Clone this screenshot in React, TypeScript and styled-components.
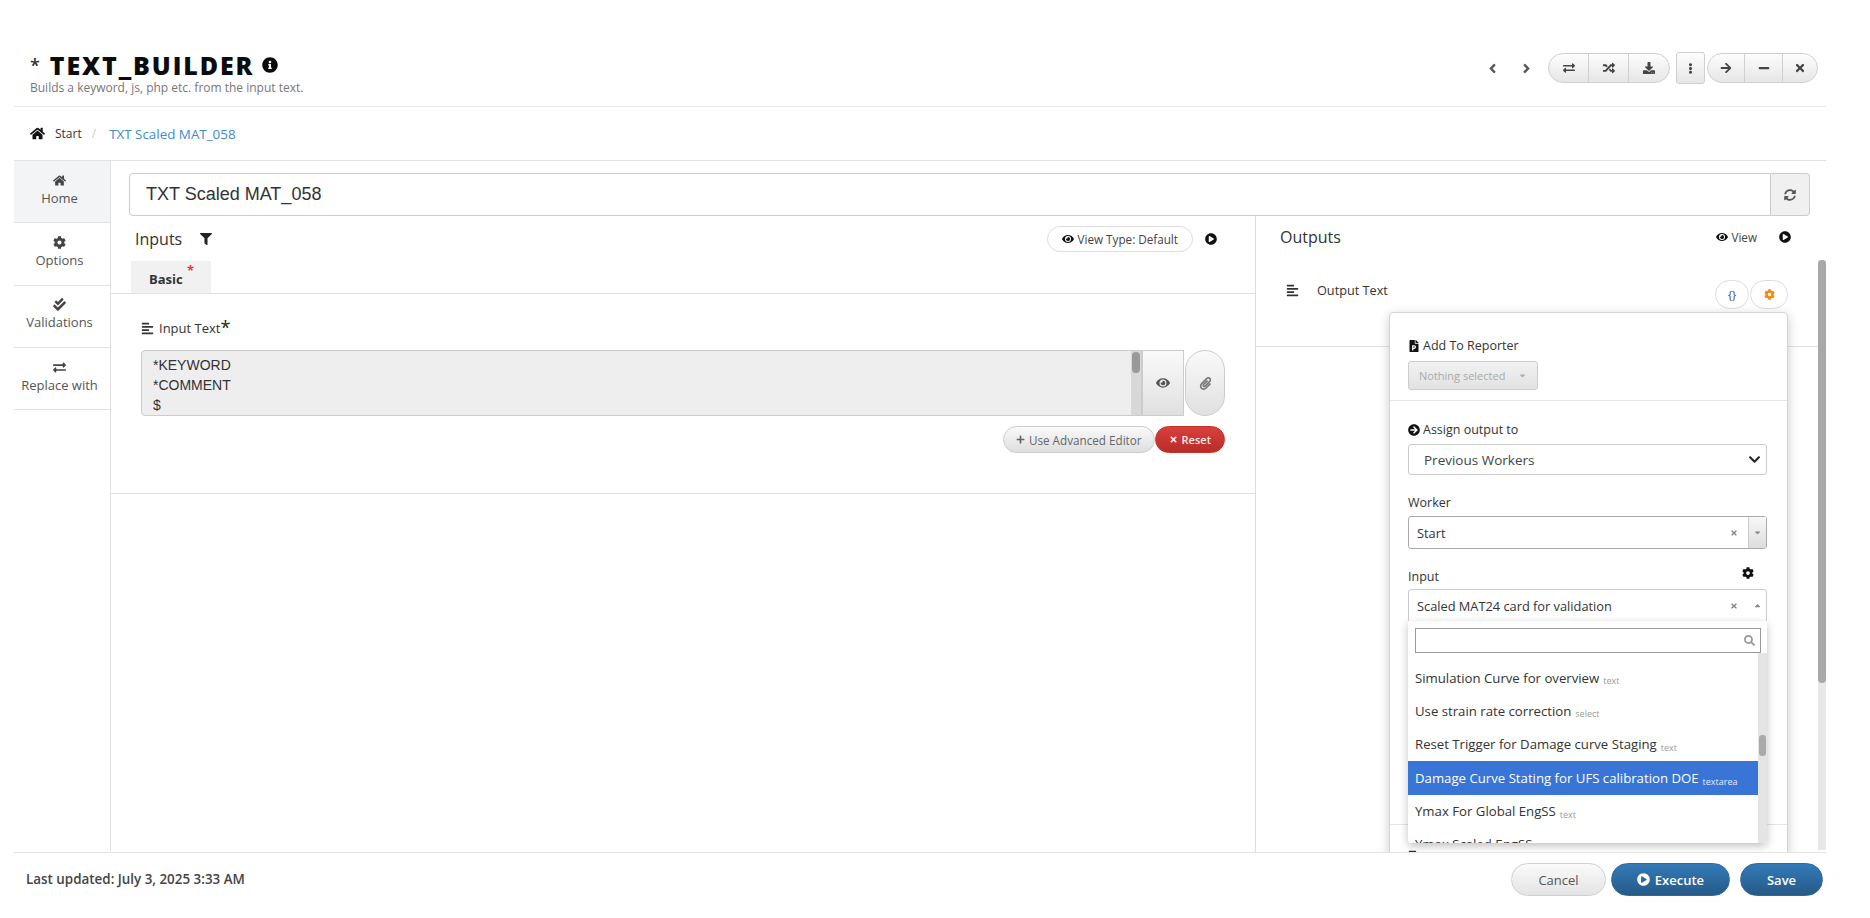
import React from 'react';
import styled, { createGlobalStyle } from 'styled-components';
import {
  FaAlignLeft,
  FaAngleLeft,
  FaAngleRight,
  FaArrowCircleRight,
  FaArrowRight,
  FaCaretDown,
  FaCaretUp,
  FaCheckDouble,
  FaChevronDown,
  FaCog,
  FaDownload,
  FaEllipsisV,
  FaExchangeAlt,
  FaEye,
  FaFilePowerpoint,
  FaFilter,
  FaHome,
  FaInfoCircle,
  FaMinus,
  FaPaperclip,
  FaPlayCircle,
  FaPlus,
  FaRandom,
  FaSearch,
  FaSyncAlt,
  FaTimes,
} from 'react-icons/fa';

const GlobalStyle = createGlobalStyle`
  html, body {
    margin: 0;
    padding: 0;
    background: #fff;
  }
  body {
    font-family: "Open Sans", "Liberation Sans", sans-serif;
    color: #333;
  }
  * {
    box-sizing: border-box;
  }
`;

const Page = styled.div`
  display: flex;
  flex-direction: column;
  width: 1870px;
  height: 918px;
  padding: 0 44px 0 14px;
  overflow: hidden;
`;

const Header = styled.header`
  display: flex;
  justify-content: space-between;
  height: 107px;
  padding: 50px 8px 0 16px;
  border-bottom: 1px solid #e8e8e8;
  flex: none;
`;

const TitleBlock = styled.div`
  display: flex;
  flex-direction: column;
`;

const Title = styled.h1`
  display: flex;
  align-items: center;
  margin: 0;
  height: 30px;
  font-size: 25px;
  font-weight: 800;
  line-height: 30px;
  letter-spacing: 1.9px;
  color: #0c0c0c;

  svg {
    font-size: 16px;
    margin-left: 8px;
  }
`;

const Star = styled.span`
  font-size: 18px;
  font-weight: 600;
  margin-right: 8px;
  color: #333;
`;

const Subtitle = styled.div`
  font-size: 12px;
  line-height: 14px;
  margin-top: 1px;
  color: #777;
`;

const Toolbar = styled.div`
  display: flex;
  align-items: flex-start;
  padding-top: 3px;
`;

const PagerButton = styled.span`
  display: flex;
  align-items: center;
  justify-content: center;
  width: 34px;
  height: 30px;
  font-size: 15px;
  color: #555;
`;

const PillGroup = styled.div`
  display: flex;
  height: 30px;
  margin-left: 5px;
  border: 1px solid #d0d0d0;
  border-radius: 15px;
  overflow: hidden;
  background: linear-gradient(#fdfdfd, #e6e6e6);
`;

const PillButton = styled.span`
  display: flex;
  align-items: center;
  justify-content: center;
  width: ${(props: { $width: number }) => props.$width}px;
  font-size: 12px;
  color: #444;
  border-right: 1px solid #d0d0d0;

  &:last-child {
    border-right: none;
  }
`;

const KebabButton = styled.span`
  display: flex;
  align-items: center;
  justify-content: center;
  width: 29px;
  height: 32px;
  margin: -1px 0 0 6px;
  border: 1px solid #d0d0d0;
  border-radius: 3px;
  font-size: 11px;
  color: #444;
  background: linear-gradient(#fdfdfd, #e6e6e6);

  & + ${PillGroup} {
    margin-left: 2px;
  }
`;

const Breadcrumb = styled.nav`
  display: flex;
  align-items: center;
  height: 54px;
  padding-left: 16px;
  font-size: 12px;
  border-bottom: 1px solid #e3e3e3;
  flex: none;

  svg {
    font-size: 15px;
    color: #111;
    margin-right: 10px;
  }
`;

const CrumbSep = styled.span`
  margin: 0 13px 0 10px;
  color: #ccc;
`;

const CrumbLink = styled.span`
  font-size: 13.4px;
  color: #428bca;
`;

const Body = styled.div`
  display: flex;
  height: 691px;
  overflow: hidden;
  flex: none;
`;

const Sidebar = styled.aside`
  width: 97px;
  flex: none;
  border-right: 1px solid #e3e3e3;
`;

const SideItem = styled.div<{ $active?: boolean }>`
  display: flex;
  flex-direction: column;
  align-items: center;
  justify-content: center;
  height: 62.3px;
  padding: 0 5px 3px 0;
  font-size: 13px;
  line-height: 17px;
  color: #555;
  background: ${(props) => (props.$active ? '#f3f4f5' : '#fff')};
  border-bottom: 1px solid #e3e3e3;

  svg {
    font-size: 13px;
    margin-bottom: 3px;
    color: #444;
  }
`;

const Main = styled.main`
  display: flex;
  flex-direction: column;
  flex: 1;
  min-width: 0;
`;

const NameRow = styled.div`
  display: flex;
  height: 43px;
  margin: 12px 16px 0 18px;
  flex: none;
`;

const NameInput = styled.div`
  display: flex;
  align-items: center;
  flex: 1;
  padding-left: 16px;
  font-family: "Liberation Sans", sans-serif;
  font-size: 18px;
  color: #333;
  border: 1px solid #ccc;
  border-radius: 4px 0 0 4px;
`;

const NameAddon = styled.span`
  display: flex;
  align-items: center;
  justify-content: center;
  width: 39px;
  font-size: 12px;
  color: #555;
  background: #f0f0f0;
  border: 1px solid #ccc;
  border-left: none;
  border-radius: 0 4px 4px 0;
`;

const Panels = styled.div`
  display: flex;
  flex: 1;
  min-height: 0;
`;

const InputsPanel = styled.section`
  width: 1145px;
  flex: none;
  border-right: 1px solid #dcdcdc;
`;

const OutputsPanel = styled.section`
  position: relative;
  flex: 1;
  min-width: 0;
`;

const PanelHead = styled.div<{ $lift?: number }>`
  display: flex;
  align-items: center;
  height: 45px;
  padding: 0 0 ${(props) => props.$lift ?? 0}px 24px;
`;

const PanelTitle = styled.span`
  font-size: 16px;
  color: #333;
`;

const FilterMark = styled.span`
  display: flex;
  margin-left: 18px;
  font-size: 12px;
  color: #222;
`;

const ViewPill = styled.span`
  display: flex;
  align-items: center;
  gap: 4px;
  height: 26px;
  margin-left: auto;
  padding: 0 14px;
  font-size: 11.7px;
  color: #444;
  border: 1px solid #ddd;
  border-radius: 13px;

  svg {
    font-size: 12px;
    color: #111;
  }
`;

const CircleMark = styled.span<{ $gap: number; $end: number }>`
  display: flex;
  margin: 0 ${(props) => props.$end}px 0 ${(props) => props.$gap}px;
  font-size: 12px;
  color: #111;
`;

const TabBar = styled.div`
  display: flex;
  height: 33px;
  padding-left: 20px;
  border-bottom: 1px solid #e0e0e0;
`;

const Tab = styled.span`
  position: relative;
  display: flex;
  align-items: center;
  width: 80px;
  padding: 3px 0 0 18px;
  font-size: 13px;
  font-weight: 700;
  color: #333;
  background: #f1f1f1;
`;

const TabStar = styled.span`
  position: absolute;
  top: 0;
  left: 56px;
  font-size: 13px;
  color: #e33;
`;

const InputBlock = styled.div`
  height: 200px;
  padding: 23px 30px 0 30px;
  border-bottom: 1px solid #e0e0e0;
`;

const FieldLabel = styled.div`
  display: flex;
  align-items: center;
  height: 22px;
  font-size: 13px;
  color: #333;

  svg {
    font-size: 13px;
    margin-right: 5px;
    color: #333;
  }
`;

const RequiredMark = styled.span`
  font-size: 18px;
  line-height: 14px;
  color: #222;
  margin-top: -2px;
`;

const TextRow = styled.div`
  display: flex;
  height: 66px;
  margin-top: 11px;
`;

const TextBox = styled.div`
  position: relative;
  flex: 1;
  padding: 4px 11px;
  font-family: "Liberation Sans", sans-serif;
  font-size: 14px;
  line-height: 20px;
  white-space: pre;
  color: #333;
  background: #eee;
  border: 1px solid #ccc;
  border-radius: 4px 0 0 4px;
`;

const TextScroll = styled.span`
  position: absolute;
  top: 0;
  right: 0;
  bottom: 0;
  width: 10px;
  background: #d8d8d8;

  &::before {
    content: '';
    position: absolute;
    top: 1px;
    left: 1px;
    width: 8px;
    height: 21px;
    background: #999;
    border-radius: 4px;
  }
`;

const EyeButton = styled.span`
  display: flex;
  align-items: center;
  justify-content: center;
  width: 42px;
  font-size: 14px;
  color: #555;
  background: linear-gradient(#fafafa, #e0e0e0);
  border: 1px solid #ccc;
`;

const ClipButton = styled.span`
  display: flex;
  align-items: center;
  justify-content: center;
  width: 40px;
  margin-left: 1px;
  font-size: 13px;
  color: #777;
  background: linear-gradient(#fafafa, #e0e0e0);
  border: 1px solid #ccc;
  border-radius: 20px;
`;

const ActionRow = styled.div`
  display: flex;
  justify-content: flex-end;
  height: 27px;
  margin-top: 10px;
`;

const SmallButton = styled.span<{ $danger?: boolean }>`
  display: flex;
  align-items: center;
  justify-content: center;
  gap: 4px;
  padding: 0 ${(props) => (props.$danger ? 13 : 12)}px;
  font-size: ${(props) => (props.$danger ? 11 : 11.7)}px;
  color: ${(props) => (props.$danger ? '#f6e6e6' : '#666')};
  font-weight: ${(props) => (props.$danger ? 600 : 400)};
  background: ${(props) =>
    props.$danger ? 'linear-gradient(#d9403c, #b92c28)' : 'linear-gradient(#fafafa, #dedede)'};
  border: 1px solid ${(props) => (props.$danger ? '#c9302c' : '#ccc')};
  border-radius: 14px;

  svg {
    font-size: 9px;
  }
`;

const OutputRow = styled.div`
  display: flex;
  align-items: flex-start;
  height: 86px;
  padding: 14px 38px 0 30px;
  border-bottom: 1px solid #e0e0e0;
`;

const OutputName = styled.div`
  display: flex;
  align-items: center;
  height: 30px;
  font-size: 12.7px;
  color: #333;

  svg {
    font-size: 13px;
    margin-right: 18px;
  }
`;

const RoundGroup = styled.div`
  display: flex;
  gap: 1px;
  margin-left: auto;
  margin-top: 5px;
`;

const RoundButton = styled.span<{ $accent?: boolean; $width: number }>`
  display: flex;
  align-items: center;
  justify-content: center;
  width: ${(props) => props.$width}px;
  height: 29px;
  font-size: 11px;
  color: ${(props) => (props.$accent ? '#f28a14' : '#444')};
  border: 1px solid #ddd;
  border-radius: 15px;
`;

const ViewLink = styled.span`
  display: flex;
  align-items: center;
  gap: 3px;
  margin-left: auto;
  font-size: 11.7px;
  color: #444;

  svg {
    font-size: 12px;
    color: #111;
  }
`;

const Scrollbar = styled.div`
  position: absolute;
  top: 44px;
  right: 0;
  width: 8px;
  height: 590px;
  background: #e8e8e8;

  &::before {
    content: '';
    position: absolute;
    top: 0;
    left: 0;
    width: 8px;
    height: 423px;
    background: #a8a8a8;
    border-radius: 4px;
  }
`;

const Popover = styled.div`
  position: absolute;
  top: 96px;
  left: 133px;
  width: 399px;
  height: 560px;
  background: #fff;
  border: 1px solid #d4d4d4;
  border-radius: 4px;
  box-shadow: 0 3px 12px rgba(0, 0, 0, 0.2);
`;

const PopSection = styled.div`
  padding: 24px 18px 10px;
  border-bottom: 1px solid #e6e6e6;
  height: 88px;
`;

const PopBody = styled.div`
  height: 424px;
  padding: 20px 20px 0 18px;
  border-bottom: 1px solid #e6e6e6;
`;

const PopFoot = styled.div`
  padding: 24px 0 0 18px;
  font-size: 13px;
  color: #333;
`;

const PopLabel = styled.div`
  position: relative;
  display: flex;
  align-items: center;
  gap: 3px;
  height: 17px;
  font-size: 12.5px;
  color: #333;

  svg {
    font-size: 12px;
    color: #111;
  }
`;

const LabelGear = styled.span`
  position: absolute;
  top: -1px;
  right: 13px;
  display: flex;
`;

const DisabledSelect = styled.div`
  display: flex;
  align-items: center;
  justify-content: space-between;
  width: 130px;
  height: 29px;
  margin-top: 7px;
  padding: 0 10px;
  font-size: 11px;
  color: #aaa;
  background: linear-gradient(#f2f2f2, #e2e2e2);
  border: 1px solid #ccc;
  border-radius: 3px;

  svg {
    font-size: 9px;
  }
`;

const NativeSelect = styled.div`
  display: flex;
  align-items: center;
  justify-content: space-between;
  height: 31px;
  margin: 6px 0 19px;
  padding: 0 5px 0 15px;
  font-size: 13.5px;
  color: #444;
  border: 1px solid #ccc;
  border-radius: 3px;

  svg {
    font-size: 13px;
    color: #222;
  }
`;

const ComboBox = styled.div<{ $open?: boolean }>`
  position: relative;
  display: flex;
  align-items: center;
  height: 33px;
  margin: ${(props) => (props.$open ? '4px 0 0' : '5px 0 19px')};
  padding-left: 8px;
  font-size: 12.8px;
  color: #333;
  border: 1px solid ${(props) => (props.$open ? '#ccc' : '#aaa')};
  border-radius: ${(props) => (props.$open ? '3px 3px 0 0' : '3px')};
`;

const ComboClear = styled.span`
  display: flex;
  margin-left: auto;
  margin-right: 10px;
  font-size: 8px;
  color: #888;
`;

const ComboArrow = styled.span<{ $boxed?: boolean }>`
  display: flex;
  align-items: center;
  justify-content: center;
  align-self: stretch;
  width: 18px;
  font-size: 9px;
  color: #888;
  border-left: ${(props) => (props.$boxed ? '1px solid #ccc' : 'none')};
  background: ${(props) => (props.$boxed ? 'linear-gradient(#f8f8f8, #ddd)' : 'none')};
`;

const Dropdown = styled.div`
  position: absolute;
  z-index: 2;
  top: 100%;
  left: -1px;
  right: -1px;
  height: 222px;
  overflow: hidden;
  background: #fff;
  box-shadow: 0 3px 8px rgba(0, 0, 0, 0.25);
  border-radius: 0 0 3px 3px;
`;

const DropSearch = styled.div`
  display: flex;
  align-items: center;
  justify-content: flex-end;
  height: 25px;
  margin: 7px 6px 0 7px;
  padding-right: 5px;
  font-size: 11px;
  color: #999;
  border: 1px solid #999;
`;

const DropList = styled.ul`
  position: relative;
  margin: 8px 0 0;
  padding: 0 9px 0 0;
  list-style: none;
`;

const DropTrack = styled.span`
  position: absolute;
  top: -8px;
  right: 0;
  width: 9px;
  height: 220px;
  background: #e4e4e4;

  &::before {
    content: '';
    position: absolute;
    top: 82px;
    left: 1px;
    width: 7px;
    height: 21px;
    background: #aaa;
    border-radius: 3px;
  }
`;

const DropItem = styled.li<{ $selected?: boolean; $height: number }>`
  display: flex;
  align-items: center;
  gap: 4px;
  height: ${(props) => props.$height}px;
  padding-left: 7px;
  font-size: 13.2px;
  white-space: nowrap;
  color: ${(props) => (props.$selected ? '#fff' : '#333')};
  background: ${(props) => (props.$selected ? '#3875d7' : 'transparent')};

  small {
    font-size: 9px;
    margin-top: 6px;
    color: ${(props) => (props.$selected ? '#e4ecfa' : '#999')};
  }
`;

const Footer = styled.footer`
  display: flex;
  align-items: flex-start;
  justify-content: space-between;
  flex: 1;
  padding: 10px 3px 0 12px;
  border-top: 1px solid #e3e3e3;
  position: relative;
  background: #fff;
`;

const UpdatedAt = styled.span`
  margin-top: 7px;
  font-size: 13.4px;
  font-weight: 600;
  color: #444;
`;

const FooterActions = styled.div`
  display: flex;
`;

const FooterButton = styled.span<{ $primary?: boolean; $width: number; $gap: number }>`
  display: flex;
  align-items: center;
  justify-content: center;
  gap: 5px;
  width: ${(props) => props.$width}px;
  height: 33px;
  margin-left: ${(props) => props.$gap}px;
  font-size: 13px;
  font-weight: ${(props) => (props.$primary ? 600 : 400)};
  color: ${(props) => (props.$primary ? '#fff' : '#555')};
  background: ${(props) =>
    props.$primary ? 'linear-gradient(#337ab7, #265a88)' : 'linear-gradient(#fafafa, #e4e4e4)'};
  border: 1px solid ${(props) => (props.$primary ? '#2b6a9f' : '#d0d0d0')};
  border-radius: 17px;

  svg {
    font-size: 13px;
  }
`;

const sideItems = [
  { label: 'Home', icon: <FaHome />, active: true },
  { label: 'Options', icon: <FaCog /> },
  { label: 'Validations', icon: <FaCheckDouble /> },
  { label: 'Replace with', icon: <FaExchangeAlt /> },
];

const inputOptions = [
  { name: 'Simulation Curve for overview', type: 'text', height: 33 },
  { name: 'Use strain rate correction', type: 'select', height: 33 },
  { name: 'Reset Trigger for Damage curve Staging', type: 'text', height: 34 },
  { name: 'Damage Curve Stating for UFS calibration DOE', type: 'textarea', height: 34, selected: true },
  { name: 'Ymax For Global EngSS', type: 'text', height: 32 },
  { name: 'Ymax Scaled EngSS', type: 'text', height: 33 },
];

const App: React.FC = () => {
  return (
    <Page>
      <GlobalStyle />
      <Header>
        <TitleBlock>
          <Title>
            <Star>*</Star>TEXT_BUILDER
            <FaInfoCircle />
          </Title>
          <Subtitle>Builds a keyword, js, php etc. from the input text.</Subtitle>
        </TitleBlock>
        <Toolbar>
          <PagerButton><FaAngleLeft /></PagerButton>
          <PagerButton><FaAngleRight /></PagerButton>
          <PillGroup>
            <PillButton $width={40}><FaExchangeAlt /></PillButton>
            <PillButton $width={40}><FaRandom /></PillButton>
            <PillButton $width={40}><FaDownload /></PillButton>
          </PillGroup>
          <KebabButton><FaEllipsisV /></KebabButton>
          <PillGroup>
            <PillButton $width={37}><FaArrowRight /></PillButton>
            <PillButton $width={38}><FaMinus /></PillButton>
            <PillButton $width={34}><FaTimes /></PillButton>
          </PillGroup>
        </Toolbar>
      </Header>

      <Breadcrumb>
        <FaHome />
        Start
        <CrumbSep>/</CrumbSep>
        <CrumbLink>TXT Scaled MAT_058</CrumbLink>
      </Breadcrumb>

      <Body>
        <Sidebar>
          {sideItems.map((item) => (
            <SideItem key={item.label} $active={item.active}>
              {item.icon}
              {item.label}
            </SideItem>
          ))}
        </Sidebar>

        <Main>
          <NameRow>
            <NameInput>TXT Scaled MAT_058</NameInput>
            <NameAddon><FaSyncAlt /></NameAddon>
          </NameRow>

          <Panels>
            <InputsPanel>
              <PanelHead>
                <PanelTitle>Inputs</PanelTitle>
                <FilterMark><FaFilter /></FilterMark>
                <ViewPill>
                  <FaEye />
                  View Type: Default
                </ViewPill>
                <CircleMark $gap={12} $end={38}><FaPlayCircle /></CircleMark>
              </PanelHead>
              <TabBar>
                <Tab>
                  Basic
                  <TabStar>*</TabStar>
                </Tab>
              </TabBar>
              <InputBlock>
                <FieldLabel>
                  <FaAlignLeft />
                  Input Text
                  <RequiredMark>*</RequiredMark>
                </FieldLabel>
                <TextRow>
                  <TextBox>
                    {'*KEYWORD\n*COMMENT\n$'}
                    <TextScroll />
                  </TextBox>
                  <EyeButton><FaEye /></EyeButton>
                  <ClipButton><FaPaperclip /></ClipButton>
                </TextRow>
                <ActionRow>
                  <SmallButton>
                    <FaPlus />
                    Use Advanced Editor
                  </SmallButton>
                  <SmallButton $danger>
                    <FaTimes />
                    Reset
                  </SmallButton>
                </ActionRow>
              </InputBlock>
            </InputsPanel>

            <OutputsPanel>
              <PanelHead $lift={4}>
                <PanelTitle>Outputs</PanelTitle>
                <ViewLink>
                  <FaEye />
                  View
                </ViewLink>
                <CircleMark $gap={22} $end={35}><FaPlayCircle /></CircleMark>
              </PanelHead>
              <OutputRow>
                <OutputName>
                  <FaAlignLeft />
                  Output Text
                </OutputName>
                <RoundGroup>
                  <RoundButton $width={34}>{'{}'}</RoundButton>
                  <RoundButton $accent $width={38}><FaCog /></RoundButton>
                </RoundGroup>
              </OutputRow>

              <Scrollbar />

              <Popover>
                <PopSection>
                  <PopLabel>
                    <FaFilePowerpoint />
                    Add To Reporter
                  </PopLabel>
                  <DisabledSelect>
                    Nothing selected
                    <FaCaretDown />
                  </DisabledSelect>
                </PopSection>
                <PopBody>
                  <PopLabel>
                    <FaArrowCircleRight />
                    Assign output to
                  </PopLabel>
                  <NativeSelect>
                    Previous Workers
                    <FaChevronDown />
                  </NativeSelect>
                  <PopLabel>Worker</PopLabel>
                  <ComboBox>
                    Start
                    <ComboClear><FaTimes /></ComboClear>
                    <ComboArrow $boxed><FaCaretDown /></ComboArrow>
                  </ComboBox>
                  <PopLabel>
                    Input
                    <LabelGear><FaCog /></LabelGear>
                  </PopLabel>
                  <ComboBox $open>
                    Scaled MAT24 card for validation
                    <ComboClear><FaTimes /></ComboClear>
                    <ComboArrow><FaCaretUp /></ComboArrow>
                    <Dropdown>
                      <DropSearch><FaSearch /></DropSearch>
                      <DropList>
                        <DropTrack />
                        {inputOptions.map((option) => (
                          <DropItem key={option.name} $height={option.height} $selected={option.selected}>
                            {option.name} <small>{option.type}</small>
                          </DropItem>
                        ))}
                      </DropList>
                    </Dropdown>
                  </ComboBox>
                </PopBody>
                <PopFoot><FaAlignLeft /></PopFoot>
              </Popover>
            </OutputsPanel>
          </Panels>
        </Main>
      </Body>

      <Footer>
        <UpdatedAt>Last updated: July 3, 2025 3:33 AM</UpdatedAt>
        <FooterActions>
          <FooterButton $width={95} $gap={0}>Cancel</FooterButton>
          <FooterButton $primary $width={119} $gap={5}>
            <FaPlayCircle />
            Execute
          </FooterButton>
          <FooterButton $primary $width={83} $gap={10}>Save</FooterButton>
        </FooterActions>
      </Footer>
    </Page>
  );
};

export default App;
